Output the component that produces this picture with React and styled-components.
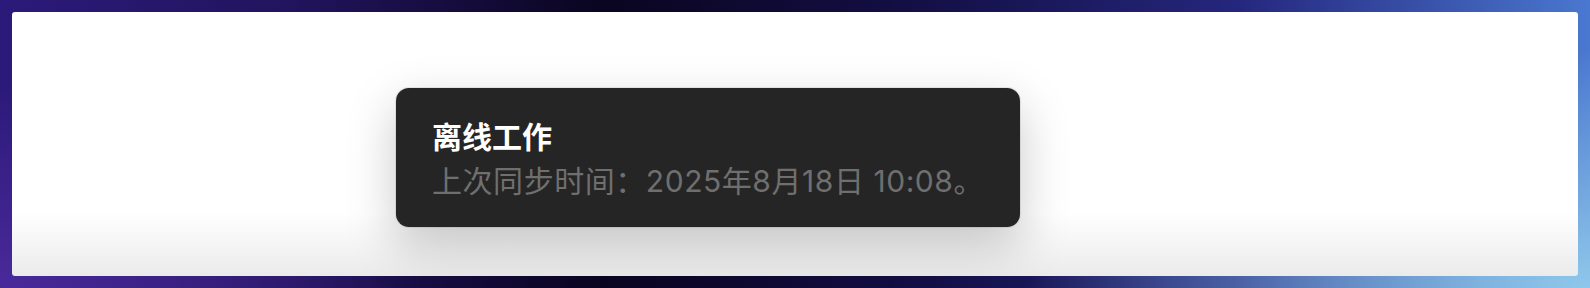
import React from "react";
import styled, { createGlobalStyle } from "styled-components";

const Global = createGlobalStyle`
  html, body { margin: 0; padding: 0; }
  body {
    width: 1590px;
    height: 288px;
    overflow: hidden;
    font-family: "Inter", "Noto Sans CJK SC", sans-serif;
  }
`;

const Backdrop = styled.div`
  box-sizing: border-box;
  width: 1590px;
  height: 288px;
  padding: 12px;
  display: flex;
  background:
    radial-gradient(560px 240px at 100% 100%, rgba(146, 204, 236, 0.95), rgba(146, 204, 236, 0) 100%),
    radial-gradient(420px 200px at 0% 100%, rgba(86, 48, 168, 0.7), rgba(86, 48, 168, 0) 100%),
    linear-gradient(to right, #2c1a7a 0%, #22145e 18%, #0a0520 38%, #140f46 58%, #25277e 78%, #4a78d0 100%);
`;

const Panel = styled.div`
  flex: 1;
  border-radius: 3px;
  background: linear-gradient(to bottom, #ffffff 0px, #ffffff 200px, #ebebeb 100%);
  padding: 76px 0 0 384px;
  box-sizing: border-box;
`;

const Toast = styled.div`
  box-sizing: border-box;
  width: 624px;
  height: 139px;
  padding: 27px 36px 24px;
  border-radius: 13px;
  background: #252525;
  box-shadow:
    0 0 0 1px rgba(0, 0, 0, 0.08),
    0 18px 50px rgba(0, 0, 0, 0.22);
  display: flex;
  flex-direction: column;
`;

const Title = styled.div`
  font-size: 30px;
  line-height: 44px;
  font-weight: 700;
  color: #ffffff;
  white-space: nowrap;
`;

const Subtitle = styled.div`
  font-size: 30px;
  line-height: 44px;
  font-weight: 400;
  letter-spacing: 0.55px;
  color: #6f6f6f;
  white-space: nowrap;
`;

export default function App() {
  return (
    <>
      <Global />
      <Backdrop>
        <Panel>
          <Toast>
            <Title>离线工作</Title>
            <Subtitle>上次同步时间：2025年8月18日 10:08。</Subtitle>
          </Toast>
        </Panel>
      </Backdrop>
    </>
  );
}
